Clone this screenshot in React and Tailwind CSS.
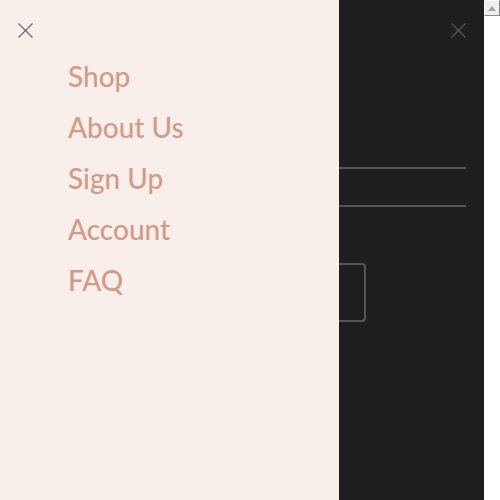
export default function App() {
  const items = ["Shop", "About Us", "Sign Up", "Account", "FAQ"];
  return (
    <div className="flex w-[500px] h-[500px] overflow-hidden">
      <div className="w-[339px] h-full bg-[#f8efeb] flex flex-col">
        <div className="h-[60px] pl-[18px] pt-[23px]">
          <svg width="15" height="15" viewBox="0 0 15 15" className="block">
            <path d="M0.5 0.5L14.5 14.5M14.5 0.5L0.5 14.5" stroke="#6b6b6b" strokeWidth="1.3" fill="none" />
          </svg>
        </div>
        <ul className="pl-[68px] flex flex-col">
          {items.map((t) => (
            <li
              key={t}
              className="h-[51px] leading-[32px] text-[28px] font-medium text-[#d49a88]"
              style={{ fontFamily: "Lato, 'Noto Sans', sans-serif" }}
            >
              {t}
            </li>
          ))}
        </ul>
      </div>
      <div className="w-[145px] h-full bg-[#1e1e1e] flex flex-col">
        <div className="h-[60px] flex justify-end pr-[18px] pt-[23px]">
          <svg width="15" height="15" viewBox="0 0 15 15" className="block">
            <path d="M0.5 0.5L14.5 14.5M14.5 0.5L0.5 14.5" stroke="#555555" strokeWidth="1.3" fill="none" />
          </svg>
        </div>
        <div className="mt-[107px] w-[127px] h-[2px] bg-[#555555]" />
        <div className="mt-[36px] w-[127px] h-[2px] bg-[#555555]" />
        <div className="mt-[56px] w-[27px] h-[59px] border-t-2 border-r-2 border-b-2 border-[#555555] rounded-r-[4px]" />
      </div>
      <div className="w-[16px] h-full bg-white flex flex-col">
        <div className="h-[16px] w-[16px] bg-[#efefef] border border-t-white border-l-white border-r-[#888] border-b-[#888] flex items-center justify-center">
          <svg width="8" height="5" viewBox="0 0 8 5" className="block">
            <path d="M4 0L8 5H0Z" fill="#a3a3a3" />
          </svg>
        </div>
      </div>
    </div>
  );
}
